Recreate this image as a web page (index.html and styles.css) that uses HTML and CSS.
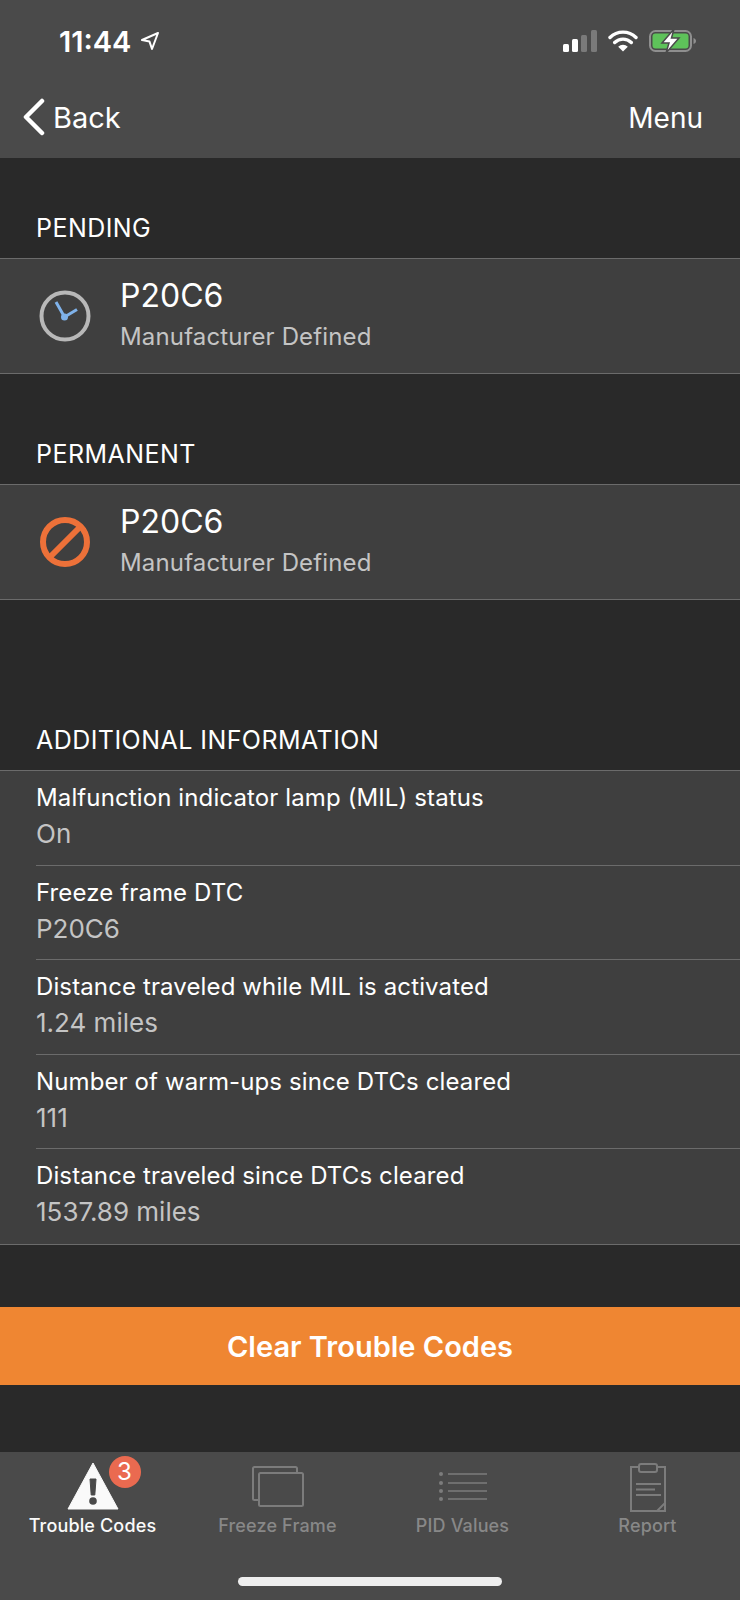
FILE: index.html
```html
<!DOCTYPE html>
<html lang="en">
<head>
    <meta charset="UTF-8">
    <meta name="viewport" content="width=device-width, initial-scale=1.0">
    <title>Trouble Codes</title>
    <link rel="stylesheet" href="styles.css">
</head>
<body>

<!-- Top bar with status icons and navigation -->
<header class="header">
    <div class="statusbar">
        <div class="clock">
            <span>11:44</span>
            <svg width="20" height="20" viewBox="0 0 20 20"><path d="M18 2 2 9l7.500 1.600L12 18z" fill="none" stroke="#fff" stroke-width="2" stroke-linejoin="round"/></svg>
        </div>
        <div class="status-icons">
            <svg width="34" height="22" viewBox="0 0 34 22">
                <rect x="0" y="14" width="6" height="8" rx="1.500" fill="#fff"/>
                <rect x="9" y="9" width="6" height="13" rx="1.500" fill="#fff"/>
                <rect x="18" y="5" width="6" height="17" rx="1.500" fill="#7a7a7a"/>
                <rect x="28" y="0" width="6" height="22" rx="1.500" fill="#7a7a7a"/>
            </svg>
            <svg class="wifi" width="30" height="22" viewBox="0 0 30 22">
                <path d="M2 7.500a18.500 18.500 0 0 1 26 0M6.700 12.500a12 12 0 0 1 16.600 0" fill="none" stroke="#fff" stroke-width="3.400" stroke-linecap="round"/>
                <path d="M15 21.500 10.200 16.700a7 7 0 0 1 9.600 0z" fill="#fff"/>
            </svg>
            <svg width="48" height="24" viewBox="0 0 48 24">
                <rect x="1" y="2" width="41" height="20" rx="5.500" fill="none" stroke="#8f8f8f" stroke-width="2"/>
                <rect x="3.500" y="4.500" width="36" height="15" rx="3" fill="#5ec25a"/>
                <path d="M44.500 9v6c1.500-.5 2.500-1.500 2.500-3s-1-2.500-2.500-3z" fill="#8f8f8f"/>
                <path d="M25 0 13 14h7l-3 10 13-15h-7.500z" fill="#fff" stroke="#4a4a4a" stroke-width="1.500"/>
            </svg>
        </div>
    </div>
    <nav class="navbar">
        <a class="back" href="#">
            <svg width="24" height="38" viewBox="0 0 24 38"><path d="M21 3 5 19l16 16" fill="none" stroke="#fff" stroke-width="4.500" stroke-linecap="round" stroke-linejoin="round"/></svg>
            <span>Back</span>
        </a>
        <a class="menu" href="#">Menu</a>
    </nav>
</header>

<main class="content">
    <h2 class="section-title first">PENDING</h2>
    <div class="code-row">
        <svg class="code-icon" width="52" height="52" viewBox="0 0 52 52">
            <circle cx="26" cy="26" r="23.500" fill="none" stroke="#b8b8b8" stroke-width="4"/>
            <path d="M17 12 25.500 27 38 19.500" fill="none" stroke="#7fb2ea" stroke-width="3"/>
            <circle cx="25.500" cy="27" r="3.500" fill="#7fb2ea"/>
        </svg>
        <div>
            <div class="code">P20C6</div>
            <div class="code-desc">Manufacturer Defined</div>
        </div>
    </div>

    <h2 class="section-title second">PERMANENT</h2>
    <div class="code-row">
        <svg class="code-icon" width="52" height="52" viewBox="0 0 52 52">
            <circle cx="26" cy="26" r="22" fill="none" stroke="#ed7139" stroke-width="6"/>
            <path d="M42 10 10 42" stroke="#ed7139" stroke-width="6"/>
        </svg>
        <div>
            <div class="code">P20C6</div>
            <div class="code-desc">Manufacturer Defined</div>
        </div>
    </div>

    <h2 class="section-title third">ADDITIONAL INFORMATION</h2>
    <div class="info-list">
        <div class="info-row">
            <div class="info-label">Malfunction indicator lamp (MIL) status</div>
            <div class="info-value">On</div>
        </div>
        <div class="info-row">
            <div class="info-label">Freeze frame DTC</div>
            <div class="info-value">P20C6</div>
        </div>
        <div class="info-row">
            <div class="info-label">Distance traveled while MIL is activated</div>
            <div class="info-value">1.24 miles</div>
        </div>
        <div class="info-row">
            <div class="info-label">Number of warm-ups since DTCs cleared</div>
            <div class="info-value">111</div>
        </div>
        <div class="info-row">
            <div class="info-label">Distance traveled since DTCs cleared</div>
            <div class="info-value">1537.89 miles</div>
        </div>
    </div>

    <button class="clear-btn">Clear Trouble Codes</button>
</main>

<!-- Bottom tabs -->
<footer class="tabbar">
    <div class="tabs">
        <a class="tab active" href="#">
            <span class="tab-icon">
                <svg class="warn-icon" width="52" height="48" viewBox="0 0 52 48">
                    <path d="M26 1 51 47H1z" fill="#fafafa" stroke="#fafafa" stroke-linejoin="round"/>
                    <path d="M23 17h6l-1.200 16h-3.600z" fill="#4a4a4a" stroke="#4a4a4a" stroke-linejoin="round"/>
                    <circle cx="26" cy="39" r="3.800" fill="#4a4a4a"/>
                </svg>
                <span class="badge">3</span>
            </span>
            <span>Trouble Codes</span>
        </a>
        <a class="tab" href="#">
            <span class="tab-icon">
                <svg width="52" height="42" viewBox="0 0 52 42">
                    <path d="M6 34H2.500a1.500 1.500 0 0 1-1.500-1.500V2.500A1.500 1.500 0 0 1 2.500 1h41A1.500 1.500 0 0 1 45 2.500V6" fill="none" stroke="#7c7c7c" stroke-width="2"/>
                    <rect x="7" y="7" width="44" height="33" rx="1.500" fill="none" stroke="#7c7c7c" stroke-width="2"/>
                </svg>
            </span>
            <span>Freeze Frame</span>
        </a>
        <a class="tab" href="#">
            <span class="tab-icon">
                <svg width="48" height="32" viewBox="0 0 48 32">
                    <g fill="#7c7c7c">
                        <circle cx="2" cy="3" r="2"/><circle cx="2" cy="12" r="2"/>
                        <circle cx="2" cy="20" r="2"/><circle cx="2" cy="28" r="2"/>
                    </g>
                    <path d="M9 3h39M9 12h39M9 20h39M9 28h39" stroke="#7c7c7c" stroke-width="1.600"/>
                </svg>
            </span>
            <span>PID Values</span>
        </a>
        <a class="tab" href="#">
            <span class="tab-icon">
                <svg width="38" height="50" viewBox="0 0 38 50">
                    <path d="M10 5H2v44h34V5h-8" fill="none" stroke="#7c7c7c" stroke-width="2"/>
                    <rect x="10" y="2" width="18" height="8" rx="2" fill="none" stroke="#7c7c7c" stroke-width="2"/>
                    <path d="M7 22h25M7 27.500h19M7 33h25M28 49l8-8" stroke="#7c7c7c" stroke-width="1.800" fill="none"/>
                </svg>
            </span>
            <span>Report</span>
        </a>
    </div>
    <div class="home-indicator"></div>
</footer>

</body>
</html>
```

FILE: styles.css
```css
/* Basic reset */
body {
    margin: 0;
    background-color: #292929;
    color: #ffffff;
    font-family: Inter, "Liberation Sans", sans-serif;
    height: 1600px;
    overflow: hidden;
    display: flex;
    flex-direction: column;
}

a {
    color: inherit;
    text-decoration: none;
}

/* Header */
.header {
    background-color: #4a4a4a;
    height: 158px;
    box-sizing: border-box;
}

.statusbar {
    display: flex;
    justify-content: space-between;
    align-items: center;
    padding: 28px 43px 0 59px;
    height: 54px;
    box-sizing: border-box;
}

.clock {
    display: flex;
    align-items: center;
    gap: 9px;
    font-size: 29px;
    font-weight: 600;
}

.status-icons {
    display: flex;
    align-items: center;
    gap: 11px;
}

.navbar {
    display: flex;
    justify-content: space-between;
    align-items: center;
    padding: 44px 37px 0 21px;
    font-size: 29px;
}

.back {
    display: flex;
    align-items: center;
    gap: 8px;
}

.menu {
    font-size: 28px;
    padding-top: 2px;
}

/* Sections */
.content {
    flex: 1;
}

.section-title {
    margin: 0;
    padding-left: 36px;
    font-size: 25px;
    font-weight: 400;
    letter-spacing: 0.45px;
    line-height: 30px;
    height: 30px;
    padding-bottom: 15px;
}

.section-title.first {
    padding-top: 55px;
}

.section-title.second {
    padding-top: 65px;
}

.section-title.third {
    padding-top: 125px;
}

.code-row {
    display: flex;
    align-items: center;
    gap: 29px;
    height: 116px;
    box-sizing: border-box;
    padding-left: 39px;
    background-color: #3f3f3f;
    border-top: 1px solid #6b6b6b;
    border-bottom: 1px solid #6b6b6b;
}

.code {
    font-size: 32px;
    line-height: 40px;
    margin-top: -2px;
    margin-bottom: 4px;
}

.code-desc {
    font-size: 24px;
    line-height: 34px;
    letter-spacing: 0.15px;
    color: #c4c4c4;
}

/* Additional information list */
.info-list {
    background-color: #3f3f3f;
    border-top: 1px solid #6b6b6b;
    border-bottom: 1px solid #6b6b6b;
    padding-left: 36px;
}

.info-row {
    height: 94.500px;
    box-sizing: border-box;
    padding-top: 10px;
    border-bottom: 1px solid #6b6b6b;
}

.info-row:last-child {
    border-bottom: none;
}

.info-label {
    font-size: 24px;
    line-height: 34px;
    letter-spacing: 0.12px;
}

.info-value {
    font-size: 26px;
    line-height: 38px;
    color: #c4c4c4;
}

.clear-btn {
    display: block;
    width: 100%;
    height: 78px;
    margin-top: 62px;
    padding: 2px 0 0;
    border: none;
    background-color: #ef8632;
    color: #ffffff;
    font-family: inherit;
    font-size: 29px;
    font-weight: 600;
}

/* Tabs */
.tabbar {
    background-color: #4a4a4a;
    height: 148px;
    position: relative;
}

.tabs {
    display: grid;
    grid-template-columns: repeat(4, 1fr);
    width: 740px;
    padding-top: 8px;
}

.tab {
    display: flex;
    flex-direction: column;
    align-items: center;
    font-size: 18px;
    font-weight: 500;
    letter-spacing: 0.15px;
    color: #888888;
}

.tab.active {
    color: #fafafa;
}

.tab-icon {
    position: relative;
    height: 54px;
    display: flex;
    align-items: center;
    margin-bottom: 1px;
}

.warn-icon {
    margin-top: -3px;
}

.badge {
    position: absolute;
    top: -4px;
    left: 42px;
    width: 32px;
    height: 32px;
    border-radius: 50%;
    background-color: #ea6a50;
    color: #ffffff;
    font-size: 24px;
    font-weight: 400;
    line-height: 32px;
    text-align: center;
    letter-spacing: 0;
}

.home-indicator {
    position: absolute;
    left: 238px;
    bottom: 14px;
    width: 264px;
    height: 9px;
    border-radius: 5px;
    background-color: #eeeeee;
}
```
